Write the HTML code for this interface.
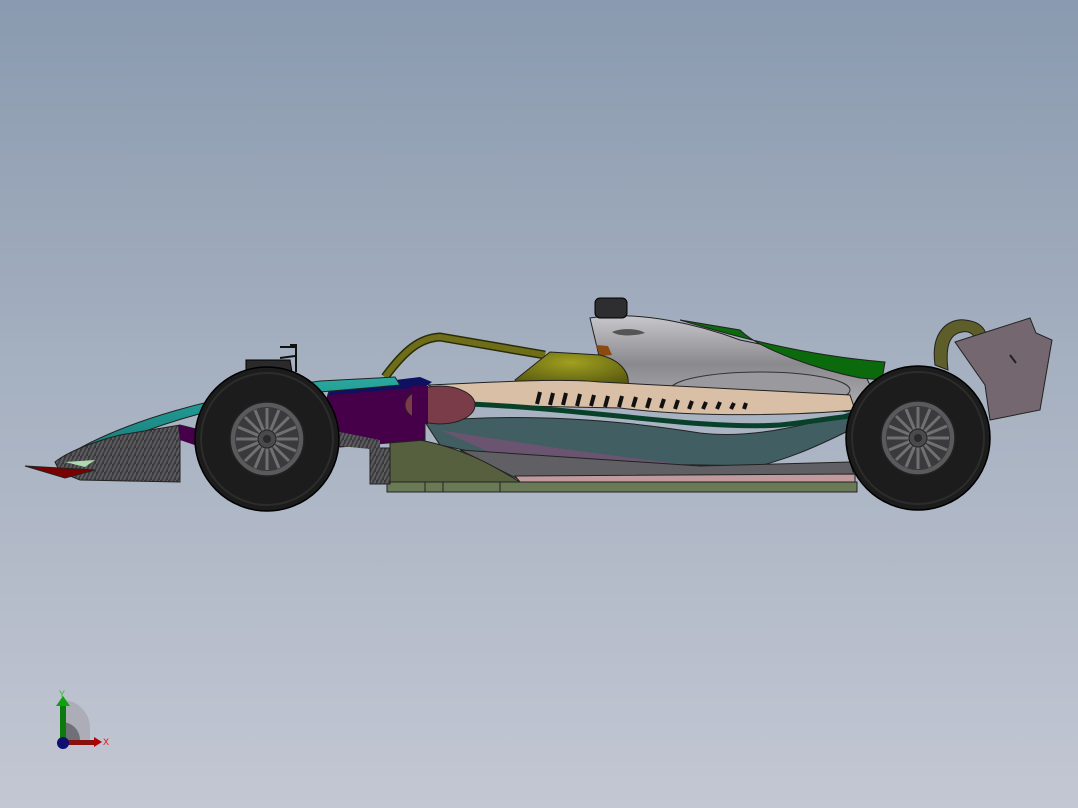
<!DOCTYPE html>
<html><head><meta charset="utf-8"><style>
html,body{margin:0;padding:0;width:1078px;height:808px;overflow:hidden}
body{background:linear-gradient(#8a9aaf 0%,#a5b0c0 45%,#c3c7d3 100%)}
svg{position:absolute;left:0;top:0}
text{font-family:"Liberation Sans",sans-serif}
</style></head><body>
<svg width="1078" height="808" viewBox="0 0 1078 808">
<defs>
<pattern id="cf" width="8" height="8" patternUnits="userSpaceOnUse">
<rect width="8" height="8" fill="#3a3a3c"/><path d="M0 8L4 0M4 8L8 0" stroke="#5c5c60" stroke-width="2"/>
</pattern>
<linearGradient id="grey" x1="0" y1="0" x2="0" y2="1"><stop offset="0" stop-color="#c8c8cc"/><stop offset="0.5" stop-color="#8a8a8e"/><stop offset="1" stop-color="#b0b0b4"/></linearGradient>
<linearGradient id="teal" x1="0" y1="0" x2="0" y2="1"><stop offset="0" stop-color="#2aa8a0"/><stop offset="1" stop-color="#137a78"/></linearGradient>
<radialGradient id="olive" cx="0.5" cy="0.3" r="0.7"><stop offset="0" stop-color="#a0a020"/><stop offset="1" stop-color="#5a5a10"/></radialGradient>
<g id="wheel">
<circle r="72" fill="#1c1c1c" stroke="#000" stroke-width="1.5"/>
<circle r="66" fill="none" stroke="#2c2c2c" stroke-width="2"/>
<circle r="37" fill="#5a5a5c" stroke="#222" stroke-width="1.5"/>
<circle r="32" fill="#3a3a3c"/>
<g stroke="#707072" stroke-width="3">
<path d="M0 -31V31M-31 0H31M-22 -22L22 22M-22 22L22 -22M-12 -29L12 29M12 -29L-12 29M-29 -12L29 12M-29 12L29 -12"/>
</g>
<circle r="9" fill="#4a4a4c" stroke="#222"/>
<circle r="4" fill="#2a2a2a"/>
</g>
</defs>

<!-- rear wing support -->
<path d="M935 365 C930 330 950 318 965 320 C985 322 990 335 985 350 L975 350 C978 338 972 330 962 332 C950 334 945 345 948 370 Z" fill="#5e5e2a" stroke="#222"/>
<!-- rear wing -->
<path d="M955 342 L1030 318 L1036 333 L1052 340 L1040 410 L990 420 L985 385 Z" fill="#756770" stroke="#222"/>
<path d="M1010 355 L1016 363" stroke="#222" stroke-width="2"/>

<!-- halo -->
<path d="M385 377 C405 350 420 338 440 337 L545 355" fill="none" stroke="#2a2a08" stroke-width="9"/>
<path d="M385 377 C405 350 420 338 440 337 L545 355" fill="none" stroke="#6e6e18" stroke-width="6"/>

<!-- engine cover -->
<path d="M590 318 C640 310 700 325 740 340 L860 365 L870 385 L850 412 L620 390 L600 360 Z" fill="url(#grey)" stroke="#222"/>
<path d="M680 320 C730 335 800 355 885 362 L882 380 L860 378 C820 370 760 350 740 330 Z" fill="#0b6a0b" stroke="#222"/>
<ellipse cx="760" cy="390" rx="90" ry="18" fill="#9a9a9e" stroke="#333"/>
<path d="M612 332 C620 328 638 328 645 333 C635 336 620 337 612 332 Z" fill="#555"/>
<!-- airbox top -->
<rect x="595" y="298" width="32" height="20" rx="5" fill="#2e2e30" stroke="#000"/>
<path d="M596 345 L608 346 L612 355 L600 356 Z" fill="#8a4a10"/>

<!-- cockpit olive -->
<path d="M515 380 L550 352 L600 355 C620 360 630 372 628 385 L520 387 Z" fill="url(#olive)" stroke="#222"/>

<!-- beige band -->
<path d="M428 385 C500 382 560 378 600 382 L850 395 L855 410 C800 415 700 418 620 408 L470 405 Z" fill="#d8bfa5" stroke="#222"/>
<g stroke="#111" stroke-width="4">
<path d="M540 392l-3 12M553 393l-3 12M566 393l-3 12M580 394l-3 12M594 395l-3 11M608 396l-3 11M622 396l-3 11M636 397l-3 10M650 398l-3 10M664 399l-3 9M678 400l-3 9M692 401l-3 8M706 402l-3 7M720 402l-3 7M734 403l-3 6M746 403l-2 6"/>
</g>
<!-- teal lower -->
<path d="M425 422 C520 412 620 420 700 433 C760 440 820 420 855 412 L850 430 C800 455 780 460 760 466 L520 462 L440 445 Z" fill="#415e62" stroke="#222"/>
<path d="M470 404 C600 410 700 430 780 425 C810 422 830 418 852 416" fill="none" stroke="#08402a" stroke-width="5"/>
<path d="M440 430 C500 440 600 455 700 466 L520 466 Z" fill="#6a5470"/>
<!-- grey below -->
<path d="M460 450 L700 466 L850 462 L855 478 L520 480 Z" fill="#606064" stroke="#222"/>
<!-- side plate green -->
<path d="M390 433 L420 440 C470 450 500 470 520 482 L390 484 Z" fill="#56603e" stroke="#222"/>
<!-- pink stripe -->
<path d="M515 476 L855 474 L855 482 L520 482 Z" fill="#c09a9c" stroke="#222"/>
<!-- floor -->
<rect x="387" y="482" width="470" height="10" fill="#6a7a56" stroke="#222"/>
<path d="M425 482v10M443 482v10M500 482v10" stroke="#222"/>

<!-- purple section -->
<path d="M330 388 L425 385 L425 423 L425 440 L340 447 L320 420 Z" fill="#450049" stroke="#222"/>
<path d="M330 388 L420 377 L432 382 L425 387 L330 395 Z" fill="#101060"/>
<ellipse cx="440" cy="405" rx="35" ry="19" fill="#7a3c48" stroke="#222"/>
<rect x="412" y="386" width="16" height="38" fill="#450049"/>
<!-- carbon under sidepod front -->
<path d="M370 448 L390 448 L390 484 L370 484 Z" fill="url(#cf)" stroke="#222"/>
<path d="M330 430 L380 440 L380 450 L330 445 Z" fill="url(#cf)"/>

<!-- nose teal -->
<path d="M60 460 C120 420 220 395 320 381 L395 377 L400 385 L320 392 C240 400 160 420 90 455 Z" fill="url(#teal)" stroke="#222"/>
<!-- nose carbon / front wing -->
<path d="M55 462 C70 450 100 440 120 435 L180 425 L200 430 L200 440 L180 440 L180 482 L80 480 L60 472 Z" fill="url(#cf)" stroke="#222"/>
<path d="M25 466 L95 470 L65 478 Z" fill="#7a0000" stroke="#222"/>
<path d="M65 462 L95 460 L85 467 Z" fill="#b0d8b0"/>
<path d="M178 425 L200 430 L215 452 L180 440 Z" fill="#450049"/>

<!-- camera/mirror on nose -->
<path d="M246 360 L290 360 L292 372 L246 372 Z" fill="#2a2a2c" stroke="#000"/>
<path d="M290 345 L296 345 L296 372 M280 347 L295 347 M280 358 L295 356" stroke="#111" stroke-width="2" fill="none"/>

<use href="#wheel" x="267" y="439"/>
<use href="#wheel" x="918" y="438"/>

<!-- triad -->
<path d="M62 740 L62 700 A28 28 0 0 1 90 728 L90 742 Z" fill="#a8a8b0" opacity="0.8"/>
<path d="M62 740 L62 722 A18 18 0 0 1 80 740 Z" fill="#707078"/>
<rect x="60" y="704" width="6" height="36" fill="#0c7a0c"/>
<path d="M56 706 L63 696 L70 706 Z" fill="#10a010"/>
<rect x="64" y="740" width="30" height="5" fill="#8a1010"/>
<path d="M94 737 L102 742 L94 747 Z" fill="#b00000"/>
<circle cx="63" cy="743" r="6" fill="#101070"/>
<text x="59" y="697" font-size="9" fill="#20c020">Y</text>
<text x="103" y="745" font-size="9" fill="#e01010">X</text>
</svg>
</body></html>
